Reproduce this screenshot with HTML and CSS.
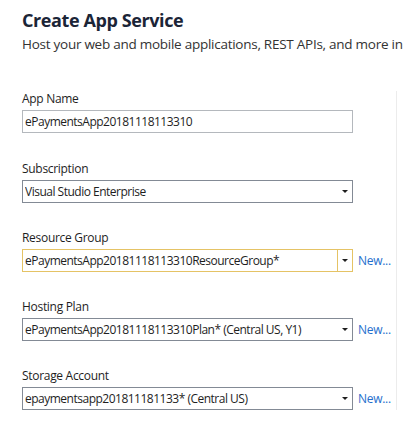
FILE: index.html
```html
<!DOCTYPE html>
<html lang="en">
<head>
<meta charset="utf-8">
<title>Create App Service</title>
<link rel="stylesheet" href="styles.css">
</head>
<body>
<div class="page">
  <header class="head">
    <h1 class="title">Create App Service</h1>
    <p class="subtitle">Host your web and mobile applications, REST APIs, and more in</p>
  </header>
  <div class="form">
    <div class="field">
      <div class="label">App Name</div>
      <div class="row">
        <div class="box textbox">ePaymentsApp20181118113310</div>
      </div>
    </div>
    <div class="field">
      <div class="label">Subscription</div>
      <div class="row">
        <div class="box select"><span class="val">Visual Studio Enterprise</span><span class="arrow"></span></div>
      </div>
    </div>
    <div class="field">
      <div class="label">Resource Group</div>
      <div class="row">
        <div class="box select focus"><span class="val">ePaymentsApp20181118113310ResourceGroup*</span><span class="arrow split"></span></div>
        <a class="new">New...</a>
      </div>
    </div>
    <div class="field">
      <div class="label">Hosting Plan</div>
      <div class="row">
        <div class="box select"><span class="val">ePaymentsApp20181118113310Plan* (Central US, Y1)</span><span class="arrow"></span></div>
        <a class="new">New...</a>
      </div>
    </div>
    <div class="field">
      <div class="label">Storage Account</div>
      <div class="row">
        <div class="box select"><span class="val">epaymentsapp201811181133* (Central US)</span><span class="arrow"></span></div>
        <a class="new">New...</a>
      </div>
    </div>
  </div>
</div>
</body>
</html>
```

FILE: styles.css
```css
html, body {
  margin: 0;
  padding: 0;
  background: #ffffff;
  overflow: hidden;
}
body {
  width: 406px;
  height: 429px;
  font-family: "Open Sans", "Noto Sans", "Liberation Sans", sans-serif;
  color: #1e1e1e;
}
.page {
  padding-left: 22px;
  padding-top: 8px;
}
.head {
  white-space: nowrap;
  overflow: hidden;
}
.title {
  margin: 0;
  font-size: 18px;
  line-height: 24px;
  font-weight: 700;
  color: #1b2537;
  letter-spacing: -0.4px;
}
.subtitle {
  margin: 2px 0 0 0;
  font-size: 13.5px;
  line-height: 20px;
  color: #333333;
  letter-spacing: -0.26px;
}
.form {
  margin-top: 45px;
  width: 374px;
  border-right: 1px solid #ececec;
}
.field {
  margin-bottom: 27px;
}
.field:first-child {
  margin-top: -8px;
  margin-bottom: 28px;
}
.field:last-child {
  margin-bottom: 20px;
}
.label {
  font-size: 12px;
  line-height: 16px;
  margin-bottom: 3px;
  letter-spacing: -0.3px;
  color: #1e1e1e;
}
.row {
  display: flex;
  align-items: center;
}
.box {
  box-sizing: border-box;
  width: 331px;
  height: 23px;
  border: 1px solid #abadb3;
  font-size: 12px;
  line-height: 21px;
  padding-left: 2px;
  letter-spacing: -0.5px;
  white-space: nowrap;
  display: flex;
  color: #1e1e1e;
}
.textbox {
  border-color: #b4b8bd;
}
.select {
  border-color: #838a95;
}
.select.focus {
  border-color: #e5c365;
}
.val {
  flex: 1;
  overflow: hidden;
}
.arrow {
  width: 14px;
  flex: none;
  display: flex;
  align-items: center;
  justify-content: center;
}
.arrow::after {
  content: "";
  width: 0;
  height: 0;
  border-left: 3px solid transparent;
  border-right: 3px solid transparent;
  border-top: 3px solid #1e1e1e;
}
.arrow.split {
  border-left: 1px solid #e5c365;
}
.new {
  margin-left: 5px;
  font-size: 12px;
  line-height: 16px;
  color: #1f6fcd;
  letter-spacing: -0.3px;
  cursor: pointer;
}
```
